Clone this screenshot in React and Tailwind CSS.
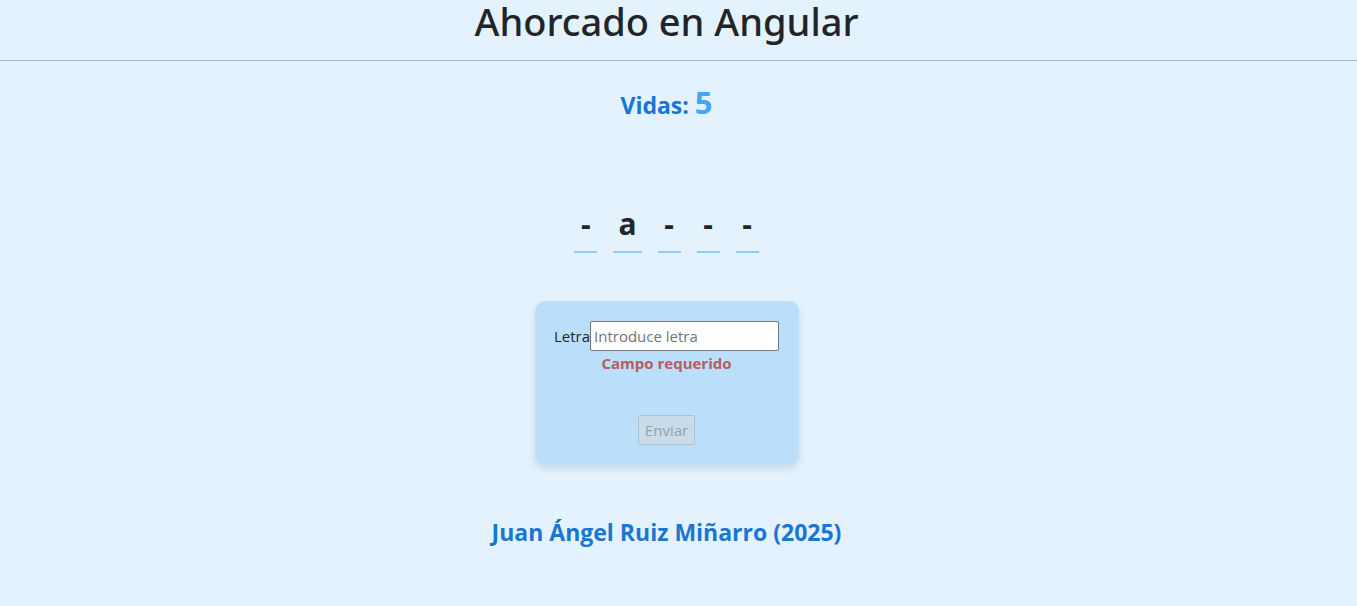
const slots = ["-", "a", "-", "-", "-"];

export default function App() {
  return (
    <div className="min-h-screen bg-[#e3f2fd] font-['Open_Sans','Noto_Sans',sans-serif] text-[#212529]">
      <header className="border-b border-[#abb7c0] pb-[18px]">
        <h1 className="pr-6 text-center font-['Noto_Sans',sans-serif] text-[38px] leading-[42px] font-medium">Ahorcado en Angular</h1>
      </header>
      <main className="flex flex-col items-center pr-6">
        <h2 className="mt-[19px] text-[23px] leading-11 font-bold text-[#1976d2]">
          Vidas: <span className="text-[31px] text-[#42a5f5]">5</span>
        </h2>
        <div className="mt-[75px] flex gap-4">
          {slots.map((slot, i) => (
            <span key={i} className="min-w-[23px] border-b-2 border-[#90caf9] px-[5px] pb-[6px] text-center text-[30px] leading-[43px] font-bold">
              {slot}
            </span>
          ))}
        </div>
        <form className="mt-12 flex w-66 flex-col items-center rounded-[10px] bg-[#bbdefb] p-5 shadow-[0_4px_8px_rgba(0,0,0,0.1)]" onSubmit={(e) => e.preventDefault()}>
          <div className="flex items-center">
            <label htmlFor="letra" className="text-[15px]">Letra</label>
            <input
              id="letra"
              type="text"
              placeholder="Introduce letra"
              className="h-[30px] w-[189px] rounded-xs border border-[#767676] bg-white px-[3px] text-[15px] placeholder:text-[#757575]"
            />
          </div>
          <p className="text-[15px] leading-6 font-bold text-[#b85c5c]">Campo requerido</p>
          <button type="submit" disabled className="mt-10 h-[30px] rounded-xs border border-[#adc1d1] bg-[#c9dcea] px-1.5 text-[15px] text-[#92a3b0]">
            Enviar
          </button>
        </form>
        <footer className="mt-12 text-[23px] leading-[38px] font-bold text-[#1976d2]">Juan Ángel Ruiz Miñarro (2025)</footer>
      </main>
    </div>
  );
}
